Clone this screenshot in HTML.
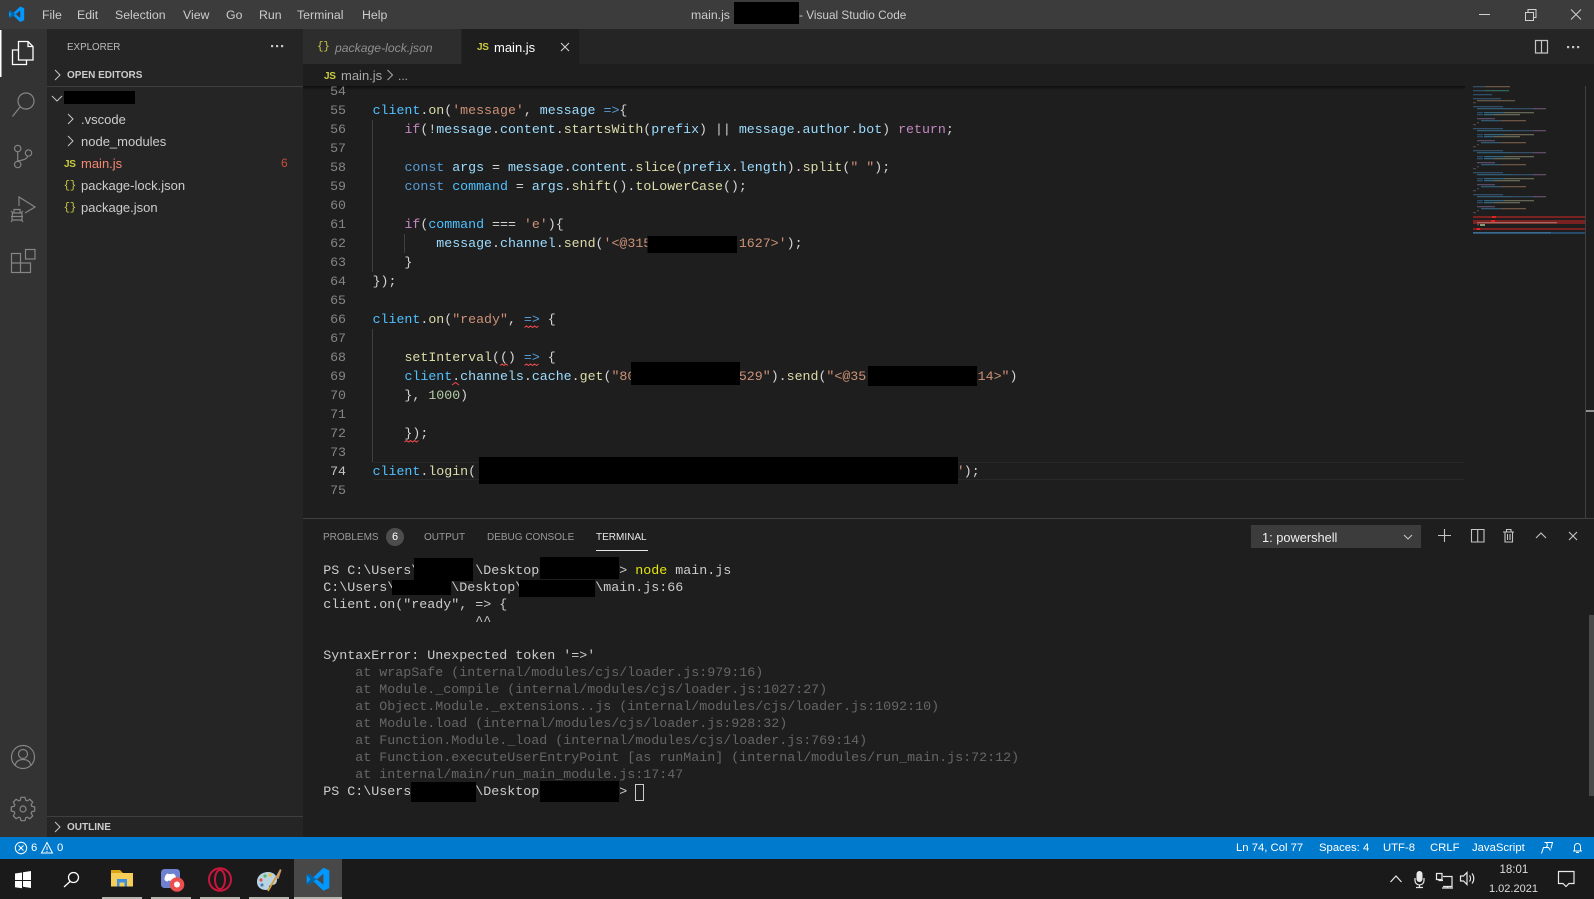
<!DOCTYPE html>
<html lang="en">
<head>
<meta charset="utf-8">
<title>main.js - Visual Studio Code</title>
<style>
html,body{margin:0;padding:0;background:#1e1e1e;}
body{position:relative;width:1594px;height:899px;overflow:hidden;font-family:"Liberation Sans",sans-serif;color:#ccc;}
.b{position:absolute;}
.t{position:absolute;white-space:pre;line-height:20px;height:20px;}
.n{position:absolute;left:315px;width:31px;text-align:right;font:13.27px/19px "Liberation Mono",monospace;color:#858585;height:19px;}
.c{position:absolute;left:372.6px;white-space:pre;font:13.27px/19px "Liberation Mono",monospace;color:#d4d4d4;height:19px;}
.v{color:#4fc1ff}.w{color:#9cdcfe}.f{color:#dcdcaa}.s{color:#ce9178}.k{color:#569cd6}.p{color:#c586c0}.u{color:#b5cea8}
.m{font-size:12.3px;color:#ccc;top:5px;}
.e{font-size:13px;color:#ccc;}
.h{position:absolute;left:323.3px;white-space:pre;font:13.33px/17px "Liberation Mono",monospace;color:#cccccc;height:17px;}
.d{color:#666}
.g{font-size:10px;color:#9a9a9a;top:528px;}
.st{font-size:11.3px;color:#fff;top:838px;}
.js{font:bold 10px/20px "Liberation Sans",sans-serif;color:#cbcb41;letter-spacing:-.3px;}
.br{font:11px/20px "Liberation Mono",monospace;color:#cbcb41;letter-spacing:-.3px;}
svg.o{position:absolute;left:0;top:0;}
</style>
</head>
<body>
<!-- backgrounds -->
<div class="b" style="left:0;top:0;width:1594px;height:29px;background:#3c3c3c"></div>
<div class="b" style="left:0;top:29px;width:47px;height:808px;background:#333"></div>
<div class="b" style="left:47px;top:29px;width:256px;height:808px;background:#252526"></div>
<div class="b" style="left:303px;top:29px;width:1291px;height:35px;background:#252526"></div>
<div class="b" style="left:303px;top:29px;width:158px;height:35px;background:#2d2d2d"></div>
<div class="b" style="left:462px;top:29px;width:117px;height:35px;background:#1e1e1e"></div>
<div class="b" style="left:303px;top:86px;width:1162px;height:4px;background:linear-gradient(#0d0d0d,#1e1e1e)"></div>
<div class="b" style="left:373px;top:462px;width:1092px;height:18px;border-top:1px solid #282828;border-bottom:1px solid #282828;box-sizing:border-box"></div>
<div class="b" style="left:0;top:837px;width:1594px;height:22px;background:#007acc"></div>
<div class="b" style="left:0;top:859px;width:1594px;height:40px;background:#1a1a1a"></div>
<div class="b" style="left:294px;top:859px;width:48px;height:40px;background:#484848"></div>
<div class="b" style="left:386px;top:528px;width:18px;height:18px;border-radius:9px;background:#4d4d4d"></div>
<div class="b" style="left:1251px;top:525px;width:170px;height:23px;background:#3c3c3c"></div>

<!-- title bar -->
<span class="t m" style="left:42px">File</span>
<span class="t m" style="left:77px">Edit</span>
<span class="t m" style="left:115px">Selection</span>
<span class="t m" style="left:183px">View</span>
<span class="t m" style="left:226px">Go</span>
<span class="t m" style="left:259px">Run</span>
<span class="t m" style="left:297px">Terminal</span>
<span class="t m" style="left:362px">Help</span>
<span class="t m" style="left:691px">main.js -</span>
<span class="t m" style="left:799px;font-size:11.8px">- Visual Studio Code</span>

<!-- sidebar -->
<span class="t" style="left:67px;top:38px;font-size:9.8px;color:#bbb">EXPLORER</span>
<span class="t" style="left:67px;top:66px;font-size:10px;font-weight:bold;color:#ccc">OPEN EDITORS</span>
<span class="t e" style="left:81px;top:110px">.vscode</span>
<span class="t e" style="left:81px;top:132px">node_modules</span>
<span class="t js" style="left:64px;top:155px">JS</span>
<span class="t e" style="left:81px;top:154px;color:#f48771">main.js</span>
<span class="t" style="left:281px;top:153px;font-size:12px;color:#c74e39">6</span>
<span class="t br" style="left:63.500px;top:176px">{}</span>
<span class="t e" style="left:81px;top:176px">package-lock.json</span>
<span class="t br" style="left:63.500px;top:198px">{}</span>
<span class="t e" style="left:81px;top:198px">package.json</span>
<span class="t" style="left:67px;top:818px;font-size:10px;font-weight:bold;color:#ccc">OUTLINE</span>

<!-- tabs -->
<span class="t br" style="left:317px;top:37px">{}</span>
<span class="t" style="left:335px;top:38px;font-size:12.2px;font-style:italic;color:#8f8f8f">package-lock.json</span>
<span class="t js" style="left:477px;top:38px">JS</span>
<span class="t e" style="left:494px;top:38px;color:#fff">main.js</span>
<span class="t js" style="left:324px;top:67px">JS</span>
<span class="t e" style="left:341px;top:66px;color:#a9a9a9">main.js</span>
<span class="t" style="left:398px;top:66px;font-size:12px;color:#a9a9a9">...</span>

<!-- line numbers -->
<div class="n" style="top:82px">54</div>
<div class="n" style="top:101px">55</div>
<div class="n" style="top:120px">56</div>
<div class="n" style="top:139px">57</div>
<div class="n" style="top:158px">58</div>
<div class="n" style="top:177px">59</div>
<div class="n" style="top:196px">60</div>
<div class="n" style="top:215px">61</div>
<div class="n" style="top:234px">62</div>
<div class="n" style="top:253px">63</div>
<div class="n" style="top:272px">64</div>
<div class="n" style="top:291px">65</div>
<div class="n" style="top:310px">66</div>
<div class="n" style="top:329px">67</div>
<div class="n" style="top:348px">68</div>
<div class="n" style="top:367px">69</div>
<div class="n" style="top:386px">70</div>
<div class="n" style="top:405px">71</div>
<div class="n" style="top:424px">72</div>
<div class="n" style="top:443px">73</div>
<div class="n" style="top:462px;color:#c6c6c6">74</div>
<div class="n" style="top:481px">75</div>

<!-- code -->
<div class="c" style="top:101px"><span class="v">client</span>.<span class="f">on</span>(<span class="s">'message'</span>, <span class="w">message</span> <span class="k">=&gt;</span>{</div>
<div class="c" style="top:120px">    <span class="p">if</span>(!<span class="w">message</span>.<span class="w">content</span>.<span class="f">startsWith</span>(<span class="w">prefix</span>) || <span class="w">message</span>.<span class="w">author</span>.<span class="w">bot</span>) <span class="p">return</span>;</div>
<div class="c" style="top:158px">    <span class="k">const</span> <span class="w">args</span> = <span class="w">message</span>.<span class="w">content</span>.<span class="f">slice</span>(<span class="w">prefix</span>.<span class="w">length</span>).<span class="f">split</span>(<span class="s">" "</span>);</div>
<div class="c" style="top:177px">    <span class="k">const</span> <span class="v">command</span> = <span class="w">args</span>.<span class="f">shift</span>().<span class="f">toLowerCase</span>();</div>
<div class="c" style="top:215px">    <span class="p">if</span>(<span class="v">command</span> === <span class="s">'e'</span>){</div>
<div class="c" style="top:234px">        <span class="w">message</span>.<span class="w">channel</span>.<span class="f">send</span>(<span class="s">'&lt;@315           1627&gt;'</span>);</div>
<div class="c" style="top:253px">    }</div>
<div class="c" style="top:272px">});</div>
<div class="c" style="top:310px"><span class="v">client</span>.<span class="f">on</span>(<span class="s">"ready"</span>, <span class="k">=&gt;</span> {</div>
<div class="c" style="top:348px">    <span class="f">setInterval</span>(() <span class="k">=&gt;</span> {</div>
<div class="c" style="top:367px">    <span class="v">client</span>.<span class="w">channels</span>.<span class="w">cache</span>.<span class="f">get</span>(<span class="s">"80             529"</span>).<span class="f">send</span>(<span class="s">"&lt;@35             814&gt;"</span>)</div>
<div class="c" style="top:386px">    }, <span class="u">1000</span>)</div>
<div class="c" style="top:424px">    });</div>
<div class="c" style="top:462px"><span class="v">client</span>.<span class="f">login</span>(<span class="s">'                                                           <span style="position:relative;left:3px">'</span></span><span style="position:relative;left:2px">);</span></div>

<!-- panel -->
<span class="t g" style="left:323px">PROBLEMS</span>
<span class="t" style="left:392px;top:527px;font-size:11px;color:#fff">6</span>
<span class="t g" style="left:424px">OUTPUT</span>
<span class="t g" style="left:487px">DEBUG CONSOLE</span>
<span class="t g" style="left:596px;color:#e7e7e7">TERMINAL</span>
<span class="t" style="left:1262px;top:528px;font-size:12.8px;color:#f0f0f0">1: powershell</span>

<!-- terminal -->
<div class="h" style="top:563px">PS C:\Users\       \Desktop\         &gt; <span style="color:#e5e510">node</span> main.js</div>
<div class="h" style="top:580px">C:\Users\       \Desktop\         \main.js:66</div>
<div class="h" style="top:597px">client.on("ready", =&gt; {</div>
<div class="h" style="top:614px">                   ^^</div>
<div class="h" style="top:648px">SyntaxError: Unexpected token '=&gt;'</div>
<div class="h d" style="top:665px">    at wrapSafe (internal/modules/cjs/loader.js:979:16)</div>
<div class="h d" style="top:682px">    at Module._compile (internal/modules/cjs/loader.js:1027:27)</div>
<div class="h d" style="top:699px">    at Object.Module._extensions..js (internal/modules/cjs/loader.js:1092:10)</div>
<div class="h d" style="top:716px">    at Module.load (internal/modules/cjs/loader.js:928:32)</div>
<div class="h d" style="top:733px">    at Function.Module._load (internal/modules/cjs/loader.js:769:14)</div>
<div class="h d" style="top:750px">    at Function.executeUserEntryPoint [as runMain] (internal/modules/run_main.js:72:12)</div>
<div class="h d" style="top:767px">    at internal/main/run_main_module.js:17:47</div>
<div class="h" style="top:784px">PS C:\Users\       \Desktop\         &gt; </div>

<!-- status -->
<span class="t st" style="left:31px">6</span>
<span class="t st" style="left:57px">0</span>
<span class="t st" style="left:1236px">Ln 74, Col 77</span>
<span class="t st" style="left:1319px">Spaces: 4</span>
<span class="t st" style="left:1383px">UTF-8</span>
<span class="t st" style="left:1430px">CRLF</span>
<span class="t st" style="left:1472px">JavaScript</span>

<!-- clock -->
<span class="t" style="left:1499.500px;top:860px;font-size:11.5px;color:#ddd">18:01</span>
<span class="t" style="left:1489px;top:879px;font-size:11px;color:#ddd">1.02.2021</span>

<svg class="o" width="1594" height="899" viewBox="0 0 1594 899" xmlns="http://www.w3.org/2000/svg">
<defs>
<g id="mb">
<rect x="1473" y="0" width="30" height="1.3" fill="#37607e"/>
<rect x="1477" y="2" width="36" height="1.3" fill="#37708e"/>
<rect x="1513" y="2" width="20" height="1.3" fill="#37607e"/>
<rect x="1533" y="2" width="13" height="1.3" fill="#7a5a80"/>
<rect x="1477" y="6" width="6" height="1.3" fill="#2c5c84"/>
<rect x="1484" y="6" width="20" height="1.3" fill="#3d7d9e"/>
<rect x="1504" y="6" width="30" height="1.3" fill="#7f7f66"/>
<rect x="1477" y="8" width="6" height="1.3" fill="#2c5c84"/>
<rect x="1484" y="8" width="10" height="1.3" fill="#3d7d9e"/>
<rect x="1494" y="8" width="26" height="1.3" fill="#7f7f66"/>
<rect x="1477" y="12" width="18" height="1.3" fill="#6a5a80"/>
<rect x="1481" y="14" width="20" height="1.3" fill="#37708e"/>
<rect x="1501" y="14" width="25" height="1.3" fill="#8c6650"/>
<rect x="1477" y="16" width="2" height="1.3" fill="#555"/>
<rect x="1473" y="18" width="3" height="1.3" fill="#555"/>
</g>
</defs>

<!-- title logo -->
<g transform="translate(8.5,6) scale(.165)">
<path fill="#0098ff" fill-rule="evenodd" d="M71 3L95 14V86L71 97L30 58L11 73L3 67V33L11 27L30 42zM71 28L44 50L71 72z"/>
<path fill="#0065a9" d="M3 33L11 27L30 42L44 50L30 58L11 73L3 67L18 50z"/>
</g>
<!-- title redaction -->
<rect x="734" y="2" width="65" height="22" fill="#000"/>
<!-- window controls -->
<g fill="none" stroke="#d0d0d0" stroke-width="1">
<path d="M1479 14.5h11"/>
<path d="M1525.5 12.5h8v8h-8zM1528 12.5v-3h8v8h-2.500"/>
<path d="M1571 9.500l10 10M1581 9.500l-10 10"/>
</g>
<!-- editor actions -->
<g fill="none" stroke="#c5c5c5" stroke-width="1.200">
<path d="M1535.500 40.500h12v12.500h-12zM1541.500 40.500v12.500"/>
</g>
<g fill="#c5c5c5">
<rect x="1567" y="46" width="2.200" height="2.200"/><rect x="1572" y="46" width="2.200" height="2.200"/><rect x="1577" y="46" width="2.200" height="2.200"/>
<rect x="271" y="45" width="2.200" height="2.200"/><rect x="276" y="45" width="2.200" height="2.200"/><rect x="281" y="45" width="2.200" height="2.200"/>
</g>
<!-- tab close -->
<path d="M561 43l8 8M569 43l-8 8" stroke="#d0d0d0" stroke-width="1.100" fill="none"/>

<!-- activity bar -->
<rect x="0" y="30" width="1.500" height="47" fill="#fff"/>
<g fill="none" stroke="#fff" stroke-width="1.300">
<path d="M18.500 41.500h9.500l5 5v13.500h-14.500zM28 41.500v5h5M18.500 50h-6v14.500h14v-4.500"/>
</g>
<g fill="none" stroke="#858585" stroke-width="1.200">
<circle cx="26" cy="101" r="8"/><path d="M20 107l-7.500 9.500"/>
<circle cx="17.700" cy="148.500" r="3.200"/><circle cx="17.700" cy="164.500" r="3.200"/><circle cx="28.500" cy="153" r="3.200"/>
<path d="M17.700 151.700v9.600M27.500 156.200c-.5 3-4 3.800-9.800 4.800"/>
<path d="M19 206v-9l16 10l-10 6"/>
<path d="M12.500 213h8.500a1 1 0 0 1 1 1v6h-9a1 1 0 0 1-1-1zM14 209.500h6v3.500h-6zM11 216.500h12M11 211l2 2M23 211l-2 2M11 222l2-2.500M23 222l-2-2.500"/>
<path d="M11.500 272.500v-19h9v9.500h10v9.500zM11.500 263h19M20.500 263v9.500"/>
<rect x="25.500" y="249.500" width="9.500" height="9.500"/>
<circle cx="23" cy="757" r="11.500"/><circle cx="23" cy="754" r="4.500"/><path d="M15.300 766c0-4 3-6.500 7.700-6.500s7.700 2.500 7.700 6.500"/>
<g transform="translate(23,809)">
<polygon points="-2.8,-8.7 -2,-11.7 2,-11.7 2.8,-8.7 4.17,-8.13 6.86,-9.69 9.69,-6.86 8.13,-4.17 8.7,-2.8 11.7,-2 11.7,2 8.7,2.8 8.13,4.17 9.69,6.86 6.86,9.69 4.17,8.13 2.8,8.7 2,11.7 -2,11.7 -2.8,8.7 -4.17,8.13 -6.86,9.69 -9.69,6.86 -8.13,4.17 -8.7,2.8 -11.7,2 -11.7,-2 -8.7,-2.8 -8.13,-4.17 -9.69,-6.86 -6.86,-9.69 -4.17,-8.13"/>
<circle r="3"/>
</g>
</g>

<!-- sidebar lines and chevrons -->
<rect x="47" y="86" width="256" height="1" fill="#3f3f3f"/>
<rect x="47" y="816" width="256" height="1" fill="#3f3f3f"/>
<g fill="none" stroke="#c5c5c5" stroke-width="1">
<path d="M55 70l5 5-5 5"/>
<path d="M52 96l5 5 5-5"/>
<path d="M68 114l5 5-5 5"/>
<path d="M68 136l5 5-5 5"/>
<path d="M55 822l5 5-5 5"/>
<path d="M387.500 70l5 5-5 5" stroke="#a9a9a9"/>
</g>
<rect x="64" y="91" width="71" height="13" fill="#000"/>

<!-- indent guides -->
<g fill="#404040">
<rect x="372" y="120" width="1" height="152"/>
<rect x="404" y="234" width="1" height="19"/>
<rect x="372" y="329" width="1" height="133"/>
</g>

<!-- squiggles -->
<g fill="none" stroke="#f14c4c" stroke-width="1">
<path d="M524.500 327.500l2-1.500 2 1.500 2-1.500 2 1.500 2-1.500 2 1.500 2-1.500"/>
<path d="M500 365.500l2-1.500 2 1.500 2-1.500 2 1.500"/>
<path d="M524.500 365.500l2-1.500 2 1.500 2-1.500 2 1.500 2-1.500 2 1.500 2-1.500"/>
<path d="M452 385l3.500-2.500 3.500 2.500"/>
<path d="M404.500 442l2-1.500 2 1.500 2-1.500 2 1.500 2-1.500 2 1.500 2-1.500"/>
</g>

<!-- code redactions -->
<rect x="647.500" y="236" width="89.500" height="17" fill="#000"/>
<rect x="631" y="362" width="109" height="23" fill="#000"/>
<rect x="868" y="366" width="109" height="20" fill="#000"/>
<rect x="479" y="457" width="479" height="27" fill="#000"/>

<!-- minimap -->
<g opacity=".75">
<rect x="1473" y="86" width="12" height="1.300" fill="#37607e"/><rect x="1485" y="86" width="25" height="1.300" fill="#8c6650"/>
<rect x="1473" y="90" width="12" height="1.300" fill="#37607e"/><rect x="1485" y="90" width="24" height="1.300" fill="#3d7d6e"/>
<rect x="1473" y="94" width="19" height="1.300" fill="#37607e"/>
<rect x="1473" y="98" width="28" height="1.300" fill="#37607e"/>
<rect x="1477" y="100" width="38" height="1.300" fill="#806a55"/>
<rect x="1473" y="102" width="3" height="1.300" fill="#555"/>
<use href="#mb" y="106"/>
<use href="#mb" y="128"/>
<use href="#mb" y="150"/>
<use href="#mb" y="172"/>
<use href="#mb" y="194"/>
</g>
<rect x="1473" y="216" width="112" height="2" fill="#7a2222"/>
<rect x="1492" y="216" width="4" height="2" fill="#d22"/>
<rect x="1473" y="220" width="112" height="4" fill="#7a2222"/>
<rect x="1491" y="220" width="4" height="2" fill="#d22"/>
<rect x="1477" y="222" width="80" height="1.300" fill="#a06a60"/>
<rect x="1477" y="224" width="2" height="1.300" fill="#555"/><rect x="1480" y="224" width="5" height="2" fill="#8a9a78"/>
<rect x="1473" y="228" width="112" height="2" fill="#7a2222"/>
<rect x="1477" y="228" width="3" height="2" fill="#e22"/>
<rect x="1473" y="232" width="112" height="2" fill="#264a6a"/>
<rect x="1473" y="232" width="78" height="1.300" fill="#3d6a8e"/>
<rect x="1585" y="86" width="1" height="432" fill="#404040"/>
<rect x="1586" y="410" width="8" height="2" fill="#8f8f8f"/>

<!-- panel -->
<rect x="303" y="518" width="1291" height="1" fill="#414141"/>
<rect x="596" y="550" width="52" height="1" fill="#e7e7e7"/>
<g fill="none" stroke="#c5c5c5" stroke-width="1.100">
<path d="M1404 535l4 4 4-4"/>
<path d="M1438 535.500h13M1444.500 529v13"/>
<path d="M1471.500 529.500h12.500v12.500h-12.500zM1477.700 529.500v12.500"/>
<path d="M1503 532h11M1505 532v10h7.500v-10M1506.500 532v-2.500h4.500v2.500M1507.500 534v6M1510 534v6"/>
<path d="M1536 538l5-5 5 5"/>
<path d="M1569 532l8 8M1577 532l-8 8"/>
</g>

<!-- terminal redactions -->
<rect x="414" y="558" width="59" height="23" fill="#000"/>
<rect x="540" y="557" width="79" height="22" fill="#000"/>
<rect x="392" y="580" width="59" height="15" fill="#000"/>
<rect x="519" y="580" width="76" height="17" fill="#000"/>
<rect x="411" y="782" width="65" height="20" fill="#000"/>
<rect x="540" y="781" width="79" height="21" fill="#000"/>
<rect x="635.500" y="784.500" width="8" height="16" fill="none" stroke="#ccc"/>
<rect x="1589" y="615" width="5" height="181" fill="#4a4a4a"/>

<!-- status bar icons -->
<g fill="none" stroke="#fff" stroke-width="1">
<circle cx="21" cy="848" r="5.700"/><path d="M18.500 845.500l5 5M23.500 845.500l-5 5"/>
<path d="M47 842.500l5.500 10.500h-11zM47 846.500v3.500M47 851v1"/>
<path d="M1541.500 853.500l2-6h5l2 3M1546 842.500a3 3 0 0 1 0 5M1544.500 842.500h8l-1.500 6"/>
<path d="M1573 851h9M1574.500 851v-4.500a3 3 0 0 1 6 0v4.500M1576 852.500h3"/>
</g>

<!-- taskbar -->
<g fill="#fff">
<path d="M15 873.500l7-1v7.500h-7zM23 872.300l8-1.300v9h-8zM15 881h7v7.300l-7-1zM23 881h8v7l-8-1.200z"/>
</g>
<g fill="none" stroke="#fff" stroke-width="1.300">
<circle cx="73.500" cy="877.500" r="5"/><path d="M70 881.500l-6 5.500"/>
</g>
<!-- folder -->
<path d="M111 870h9l3 3h10v3h-22z" fill="#d9a514"/>
<path d="M111 873h22v13.500h-22z" fill="#f5ce57"/>
<path d="M117 879h10v7.500h-2.500v-4h-5v4h-2.500z" fill="#3f8fe0"/>
<!-- discord -->
<rect x="161" y="869" width="19" height="19" rx="3.500" fill="#6f82d2"/>
<path d="M164.500 880c0-4 1.500-6 3.500-6.500l.5.7c1.500-.3 2.500-.3 3.800 0l.5-.7c2 .5 3.500 2.500 3.500 6.500c-1 1-2 1.400-3 1.500l-.7-1c-1.500.4-2.700.4-4.300 0l-.7 1c-1-.1-2-.5-3-1.500z" fill="#fff"/>
<circle cx="177" cy="884.500" r="7.300" fill="#ed4f4f"/>
<circle cx="177" cy="884.500" r="3" fill="#fff"/>
<!-- opera -->
<ellipse cx="220" cy="879.500" rx="11" ry="11.300" fill="none" stroke="#c8163c" stroke-width="2"/>
<ellipse cx="220" cy="879.500" rx="5" ry="9.500" fill="none" stroke="#c8163c" stroke-width="2"/>
<!-- palette -->
<path d="M257 882c0-7 6-10 11-10c6 0 9 4 9 8c0 3-2 5-5 5c-2 0-3 .5-3 2c0 2-1 3-3 3c-5 0-9-3-9-8z" fill="#b8d4e3"/>
<circle cx="261" cy="880" r="1.600" fill="#d9534f"/><circle cx="265" cy="876" r="1.600" fill="#5cb85c"/><circle cx="270" cy="875" r="1.600" fill="#f0c040"/><circle cx="262" cy="885" r="1.600" fill="#4a7fc0"/>
<path d="M268 891l8-14" stroke="#d99b3a" stroke-width="1.800" fill="none"/>
<path d="M275 878l5-9 1.500 1-3 9z" fill="#c79a6b"/>
<!-- vscode -->
<g transform="translate(306,867) scale(.245)">
<path fill="#0098ff" fill-rule="evenodd" d="M71 3L95 14V86L71 97L30 58L11 73L3 67V33L11 27L30 42zM71 28L44 50L71 72z"/>
<path fill="#0065a9" d="M3 33L11 27L30 42L44 50L30 58L11 73L3 67L18 50z"/>
</g>
<!-- taskbar underlines -->
<g fill="#b5b5b0">
<rect x="102" y="897" width="40" height="2"/>
<rect x="151" y="897" width="40" height="2"/>
<rect x="200" y="897" width="40" height="2"/>
<rect x="249" y="897" width="40" height="2"/>
<rect x="294" y="897" width="48" height="2"/>
</g>
<!-- tray -->
<g fill="none" stroke="#e8e8e8" stroke-width="1.200">
<path d="M1390.500 882l5.500-6 5.500 6"/>
<path d="M1415 878v2.500a4.500 4.500 0 0 0 9 0v-2.500M1419.500 885v2.500M1416 887.500h7"/>
<path d="M1443 876.500h9v10h-9M1447.500 886.500v1M1442 888h11M1436.500 873.500h5.500v6h-5.500zM1439 879.500v1h4"/>
<path d="M1460.500 876h3l3.500-3.500v12l-3.500-3.500h-3zM1469.500 875.500a5 5 0 0 1 0 6M1472 873.500a8 8 0 0 1 0 10"/>
<path d="M1558.500 871.500h15.500v12h-5l-3 3-3-3h-4.500z"/>
</g>
<rect x="1416.500" y="871" width="6" height="11" rx="3" fill="#e8e8e8"/>
</svg>
</body>
</html>
